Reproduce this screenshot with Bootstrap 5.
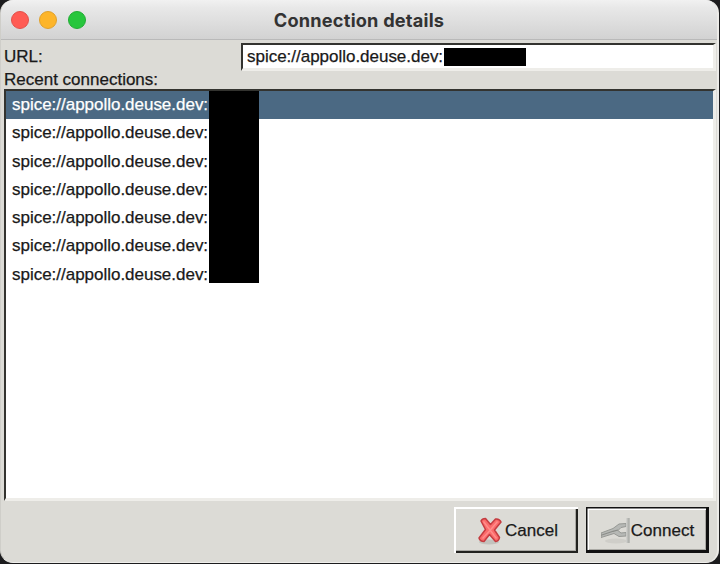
<!DOCTYPE html>
<html lang="en">
<head>
<meta charset="utf-8">
<title>Connection details</title>
<link rel="stylesheet" href="https://cdn.jsdelivr.net/npm/bootstrap@5.3.0/dist/css/bootstrap.min.css">
<style>
html{height:100%}
body{height:100%;margin:0;background:#1c1c1e;overflow:hidden;font:17px/20px "Liberation Sans",Arial,sans-serif;color:#191919;-webkit-text-stroke:.25px currentColor}
.win{width:719px;height:563px;background:#dcdbd6;border-radius:13px;overflow:hidden;border-right:2px solid #ecebe8;border-bottom:1px solid #efeeeb;border-left:1px solid #cfcec9}
.titlebar{height:40px;flex:none;background:linear-gradient(#f1f1f1,#e8e8e8 20%,#d2d2d2);border-bottom:1px solid #b9b9b9;padding-left:10px}
.title-text{font:bold 18.2px/20px Inter,"Liberation Sans",sans-serif;color:#333;letter-spacing:.2px;-webkit-text-stroke:0}
.dots{gap:10.4px}
.dot{width:18px;height:18px;border-radius:50%;border:1px solid}
.dot-r{background:#ff5b54;border-color:#e2504a}
.dot-y{background:#fdb52a;border-color:#dfa02c}
.dot-g{background:#27c63d;border-color:#22ac35}
.url-row{height:28px;margin:3px 0 0 3px}
.url-label{width:237px}
.sunken{background:#fff;border-style:solid;border-width:2px 3px 3px 2px;border-color:#33332f #eeede9 #eeede9 #33332f}
.url-field{width:475px;height:28px;padding-left:4px}
.redact{background:#000}
.url-mask{width:82px;height:18px}
.recent-label{height:18px;line-height:17px;margin-left:3px}
.conn-list{width:712px;height:412px;margin-left:3px}
.conn-row{height:28.25px;padding-left:6px}
.conn-row.selected{background:#4b6983;color:#fff}
.conn-text{width:197px;white-space:nowrap;letter-spacing:-.02px}
.list-mask{left:203px;top:0;width:50px;height:192px}
.actions{height:46px;margin:6px 8px 0 0}
.gtk-btn,.gtk-btn:hover{height:46px;border-radius:0;background:#dcdbd6;color:#191919;border:0;padding:1px 0 0;font:inherit}
.gtk-cancel,.gtk-cancel:hover{width:124px;padding-left:3px;box-shadow:inset 2px 2px #fff,inset -2px -2px #22221f,inset -3px -3px #aaa9a4}
.gtk-connect{width:123px;box-shadow:inset 0 0 0 1.5px #111,inset -3px -3px #111,inset 3px 3px #fff,inset -4px -4px #aaa9a4}
</style>
<script src="https://cdn.jsdelivr.net/npm/bootstrap@5.3.0/dist/js/bootstrap.bundle.min.js"></script>
</head>
<body>
<main class="win d-flex flex-column">
  <header class="titlebar position-relative d-flex align-items-center">
    <div class="d-flex dots"><span class="dot dot-r"></span><span class="dot dot-y"></span><span class="dot dot-g"></span></div>
    <div class="title-text position-absolute start-0 end-0 text-center">Connection details</div>
  </header>
  <div class="url-row d-flex align-items-center">
    <label class="url-label">URL:</label>
    <div class="sunken url-field d-flex align-items-center"><span class="conn-text">spice://appollo.deuse.dev:</span><span class="redact url-mask"></span></div>
  </div>
  <div class="recent-label">Recent connections:</div>
  <div class="sunken conn-list position-relative">
    <div class="conn-row selected d-flex align-items-center"><span class="conn-text">spice://appollo.deuse.dev:</span></div>
    <div class="conn-row d-flex align-items-center"><span class="conn-text">spice://appollo.deuse.dev:</span></div>
    <div class="conn-row d-flex align-items-center"><span class="conn-text">spice://appollo.deuse.dev:</span></div>
    <div class="conn-row d-flex align-items-center"><span class="conn-text">spice://appollo.deuse.dev:</span></div>
    <div class="conn-row d-flex align-items-center"><span class="conn-text">spice://appollo.deuse.dev:</span></div>
    <div class="conn-row d-flex align-items-center"><span class="conn-text">spice://appollo.deuse.dev:</span></div>
    <div class="conn-row d-flex align-items-center"><span class="conn-text">spice://appollo.deuse.dev:</span></div>
    <div class="redact list-mask position-absolute"></div>
  </div>
  <div class="actions d-flex justify-content-end gap-2">
    <button type="button" class="btn gtk-btn gtk-cancel d-flex align-items-center justify-content-center">
      <svg width="28" height="30" viewBox="0 0 28 30"><ellipse cx="12" cy="26" rx="10" ry="2.500" fill="#c3c2bd"/><path d="M4 5Q5 2.500 8.500 2.500L13.500 8.500 18.500 3Q22.500 2.500 24 6L17.500 14 22.500 21.500Q22 25 18.500 25.500L12.500 18.500 7 25.500Q3 25.500 2 22L8.500 13.500Z" fill="#fb6b6b" stroke="#c43c40" stroke-width="1.500" stroke-linejoin="round"/><path d="M6.500 5.500 13 14 19.500 22.500M20.500 5.500 13 14.500 5.500 22.500" fill="none" stroke="#ff8d8b" stroke-width="1.500"/></svg>
      <span>Cancel</span>
    </button>
    <button type="button" class="btn gtk-btn gtk-connect d-flex align-items-center justify-content-center">
      <svg width="30" height="30" viewBox="0 0 30 30"><ellipse cx="15" cy="25" rx="11" ry="2.500" fill="#cfcec9"/><path d="M0 17 12 12.500 18 8 25 7.500V10.500L20 11.500 17 14.500 20 17 25 16.500V20L18 20.500 13 17.500 0 21.500Z" fill="#b6b8b5" stroke="#969894"/><path d="M0 19.300 12 15.300 17 14" fill="none" stroke="#8a8c88" stroke-width="1.200"/><path d="M27.500 2V27" stroke="#b0b2ae" stroke-width="2.500"/><path d="M25.700 2V27" stroke="#cccdca"/></svg>
      <span>Connect</span>
    </button>
  </div>
</main>
</body>
</html>
